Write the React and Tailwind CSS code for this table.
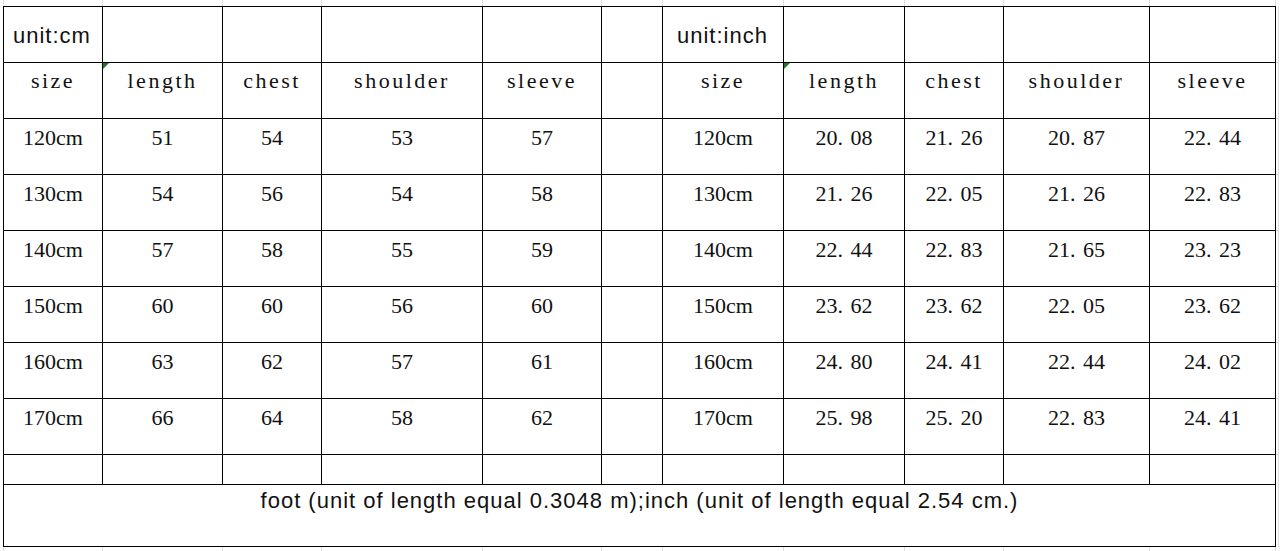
const COLS = 'grid-cols-[98px_119px_98px_160px_118px_60px_120px_120px_98px_145px_125px]'

const CM = [
  ['120cm', '51', '54', '53', '57'],
  ['130cm', '54', '56', '54', '58'],
  ['140cm', '57', '58', '55', '59'],
  ['150cm', '60', '60', '56', '60'],
  ['160cm', '63', '62', '57', '61'],
  ['170cm', '66', '64', '58', '62']
]

const INCH = [
  ['120cm', '20.08', '21.26', '20.87', '22.44'],
  ['130cm', '21.26', '22.05', '21.26', '22.83'],
  ['140cm', '22.44', '22.83', '21.65', '23.23'],
  ['150cm', '23.62', '23.62', '22.05', '23.62'],
  ['160cm', '24.80', '24.41', '22.44', '24.02'],
  ['170cm', '25.98', '25.20', '22.83', '24.41']
]

const HEAD = ['size', 'length', 'chest', 'shoulder', 'sleeve']

// SimSun-ish: the dot keeps a wide slot after it
function Num({ v }) {
  const [a, b] = v.split('.')
  if (b === undefined) return <>{v}</>
  return (
    <>
      {a}
      <span className="inline-block w-[13px] text-left">.</span>
      {b}
    </>
  )
}

function Cell({ children, head, tick }) {
  return (
    <div
      className={`relative bg-white text-center leading-[22px] text-[22px] text-[#111] font-['Liberation_Serif',serif] ${
        head ? 'pt-[7px] tracking-[2.5px]' : 'pt-[8px]'
      }`}
    >
      {tick && (
        <span className="absolute left-0 top-0 w-0 h-0 border-t-[6px] border-r-[6px] border-t-[#1f7a1f] border-r-transparent" />
      )}
      {children}
    </div>
  )
}

function Blank() {
  return <div className="bg-white" />
}

function Strip({ h }) {
  return (
    <div className="flex">
      <div className="w-[3px]" />
      <div className={`grid ${COLS} gap-px px-px bg-[#dcdcdc] ${h}`}>
        {Array.from({ length: 11 }, (_, i) => (
          <div key={i} className="bg-white" />
        ))}
      </div>
      <div className="flex-1" />
    </div>
  )
}

export default function App() {
  const rows = CM.map((r, i) => [...r, null, ...INCH[i]])

  return (
    <div className="w-[1280px] h-[551px] bg-white overflow-hidden flex flex-col">
      <Strip h="h-[6px]" />

      <div className="flex items-start h-[541px]">
        <div className="w-[3px]" />

        <div
          className={`grid ${COLS} grid-rows-[55px_55px_55px_55px_55px_55px_55px_55px_29px_61px] gap-px p-px bg-black`}
        >
          {/* unit row */}
          <div className="bg-white pl-[9px] pt-[18px] leading-[22px] text-[22px] tracking-[1px] text-[#111] font-['Liberation_Sans',Arial,sans-serif]">
            unit:cm
          </div>
          <Blank />
          <Blank />
          <Blank />
          <Blank />
          <Blank />
          <div className="bg-white pl-[14px] pt-[18px] leading-[22px] text-[22px] tracking-[1px] text-[#111] font-['Liberation_Sans',Arial,sans-serif]">
            unit:inch
          </div>
          <Blank />
          <Blank />
          <Blank />
          <Blank />

          {/* header row */}
          {HEAD.map((h, i) => (
            <Cell key={'a' + h} head tick={i === 1}>
              {h}
            </Cell>
          ))}
          <Blank />
          {HEAD.map((h, i) => (
            <Cell key={'b' + h} head tick={i === 1}>
              {h}
            </Cell>
          ))}

          {/* data */}
          {rows.map((r, i) =>
            r.map((v, j) =>
              v === null ? (
                <Blank key={i + '-' + j} />
              ) : (
                <Cell key={i + '-' + j}>
                  <Num v={v} />
                </Cell>
              )
            )
          )}

          {/* empty row */}
          {Array.from({ length: 11 }, (_, i) => (
            <Blank key={'e' + i} />
          ))}

          {/* note */}
          <div className="col-span-11 bg-white text-center pt-[5px] leading-[22px] text-[22px] tracking-[1px] text-[#111] font-['Liberation_Sans',Arial,sans-serif]">
            foot (unit of length equal 0.3048 m);inch (unit of length equal 2.54 cm.)
          </div>
        </div>

        <div className="flex-1 flex h-[541px] overflow-hidden">
          <div className="w-[2px] flex flex-col">
            <div className="h-[56px] shrink-0" />
            {Array.from({ length: 8 }, (_, i) => (
              <div key={i} className="h-[56px] shrink-0 border-t border-[#dcdcdc]" />
            ))}
          </div>
          <div className="w-px bg-[#dcdcdc]" />
        </div>
      </div>

      <Strip h="h-[4px]" />
    </div>
  )
}
